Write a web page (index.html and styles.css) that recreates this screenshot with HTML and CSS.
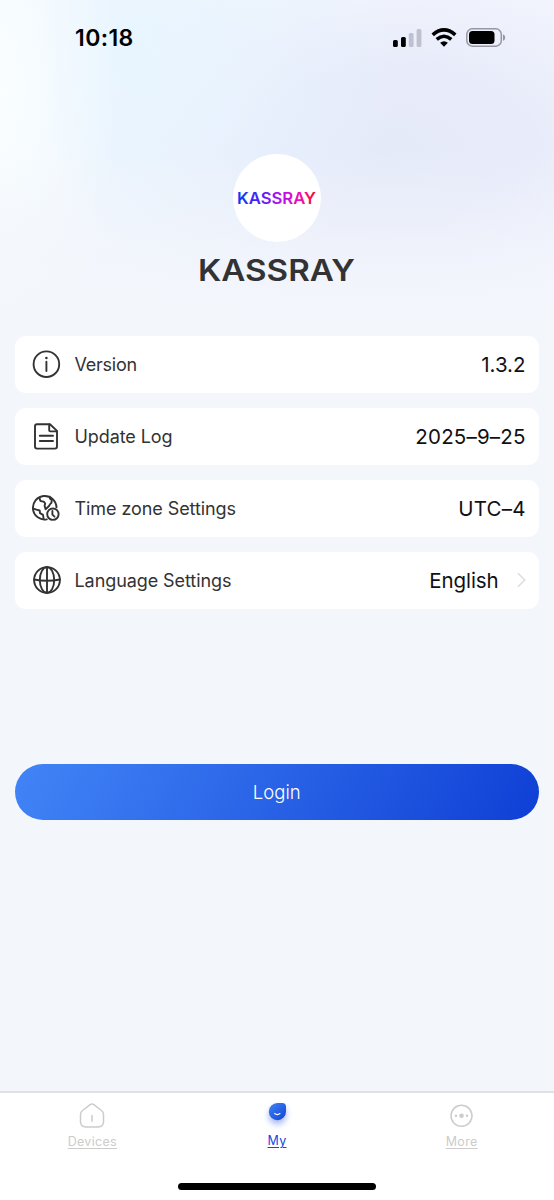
FILE: index.html
```html
<!DOCTYPE html>
<html lang="en">
<head>
<meta charset="utf-8">
<title>KASSRAY</title>
<link rel="stylesheet" href="styles.css">
</head>
<body>
<div class="app">
  <header class="status">
    <span class="time">10:18</span>
    <div class="status-icons">
      <svg width="29" height="18" viewBox="0 0 29 18"><rect x="0" y="11" width="4.8" height="7" rx="1.5"/><rect x="8" y="8" width="4.8" height="10" rx="1.5"/><g fill="#bfc1ce"><rect x="15.8" y="4" width="4.8" height="14" rx="1.5"/><rect x="23.6" y="0" width="4.8" height="18" rx="1.5"/></g></svg>
      <svg width="26" height="19" viewBox="0 0 26 19"><g fill="none" stroke="#000" stroke-width="3.6"><path d="M1.7 6.9Q13 -3 24.3 6.9"/><path d="M5.7 11.4Q13 5.1 20.3 11.4"/></g><path d="M9.1 14.8Q13 11.5 16.9 14.8L13 18.7Z"/></svg>
      <svg width="40" height="19" viewBox="0 0 40 19"><rect x=".8" y=".8" width="34.5" height="17.4" rx="5.5" fill="none" stroke="#96979f" stroke-width="1.5"/><rect x="3" y="3" width="25.5" height="13" rx="3.5"/><path d="M37 6.2Q39.2 7 39.2 9.5T37 12.8Z" fill="#96979f"/></svg>
    </div>
  </header>

  <section class="brand">
    <div class="avatar">
      <svg width="82" height="20" viewBox="0 0 82 20">
        <defs><linearGradient id="spectrum" gradientUnits="userSpaceOnUse" x1="0" y1="0" x2="80" y2="0"><stop offset="0" stop-color="#1238f5"/><stop offset=".3" stop-color="#4b20f5"/><stop offset=".55" stop-color="#b40df0"/><stop offset=".8" stop-color="#f00bb4"/><stop offset="1" stop-color="#f80d20"/></linearGradient></defs>
        <text class="logo-small" x="1" y="16" textLength="79" lengthAdjust="spacingAndGlyphs" fill="url(#spectrum)">KASSRAY</text>
      </svg>
    </div>
    <svg class="wordmark" width="166" height="40" viewBox="0 0 166 40"><text class="logo-large" x="4" y="31" textLength="157" lengthAdjust="spacingAndGlyphs">KASSRAY</text></svg>
  </section>

  <main class="list">
    <div class="row">
      <svg class="icon" viewBox="0 0 30 30"><circle cx="15.4" cy="15.2" r="12.8"/><path d="M15.4 12.7V22"/><circle cx="15.4" cy="9" r="1.3" fill="#333" stroke="none"/></svg>
      <span class="label version">Version</span><span class="value">1.3.2</span>
    </div>
    <div class="row">
      <svg class="icon" viewBox="0 0 30 30"><path d="M6 3.2H19L26 9.9V25.6Q26 27.6 24 27.6H6Q4 27.6 4 25.6V5.2Q4 3.2 6 3.2Z"/><path d="M18.2 3.4V9.2Q18.2 10.4 19.4 10.4H25.8M8.8 14.8H22M8.8 20H22"/></svg>
      <span class="label">Update Log</span><span class="value date">2025–9–25</span>
    </div>
    <div class="row">
      <svg class="icon" viewBox="0 0 30 30"><path d="M15.8 26.4A11.8 11.8 0 1 1 25.5 14.4"/><path d="M8.5 4.8L9.2 7.5Q9.6 8.4 11.2 8.4L12.9 8.7L14.2 10.5L13.6 12.7L14.6 16.2L18 13Q18.7 11.1 20.5 9.8L20.7 6.7L19 5.7L18.7 3.6M2.4 15.6L5.5 16.6L8.7 17.5L9 20.2L12 21.9L12.7 26.3"/><circle cx="21.9" cy="21.2" r="5.7"/><path d="M21.4 18V21.6L23.5 23.6"/></svg>
      <span class="label">Time zone Settings</span><span class="value utc">UTC–4</span>
    </div>
    <div class="row">
      <svg class="icon globe" viewBox="0 0 30 30"><circle cx="15" cy="15" r="12.9"/><ellipse cx="15" cy="15" rx="7.2" ry="12.9"/><path d="M15 2V28M2 14.5Q15 17 28 14.5"/></svg>
      <span class="label">Language Settings</span><span class="value english">English</span>
      <svg class="chevron" width="9" height="16" viewBox="0 0 9 16"><path d="M1 1.2L7.8 8L1 14.8"/></svg>
    </div>
  </main>

  <button class="login">Login</button>

  <nav class="tabs">
    <a class="tab"><svg width="28" height="28" viewBox="0 0 28 28"><path d="M11.8 2.9Q14 1.3 16.2 2.9L23.5 8.5Q25.5 10 25.5 12.4V19.5Q25.5 24.9 20 24.9H8Q2.5 24.9 2.5 19.5V12.4Q2.5 10 4.5 8.5ZM14 13.5V19.2"/></svg><span class="tab-label">Devices</span></a>
    <a class="tab active"><svg width="28" height="28" viewBox="0 0 28 28"><defs><linearGradient id="face" x1="0" y1="0" x2="1" y2="1"><stop stop-color="#4284f5"/><stop offset="1" stop-color="#1042d5"/></linearGradient></defs><path class="face" d="M14.4 1H19.2Q23 1 23 4.8V9.5A8.6 8.6 0 1 1 14.4 1Z"/><path class="smile" d="M11.7 11.6Q14.3 13.6 16.9 11.6"/></svg><span class="tab-label">My</span></a>
    <a class="tab"><svg width="28" height="28" viewBox="0 0 28 28"><circle cx="13.5" cy="13.8" r="10.5"/><g fill="#ccc" stroke="none"><circle cx="13.5" cy="13.8" r="2.3"/><circle cx="8" cy="13.8" r="1.2"/><circle cx="19" cy="13.8" r="1.2"/></g></svg><span class="tab-label">More</span></a>
    <div class="home-indicator"></div>
  </nav>
</div>
</body>
</html>
```
FILE: styles.css
```css
* { box-sizing: border-box; }
body { margin: 0; font-family: Inter, "Liberation Sans", sans-serif; }
.app {
  height: 1200px;
  display: flex;
  flex-direction: column;
  background:
    linear-gradient(to bottom, rgba(243,246,251,0) 0, rgba(243,246,251,0) 150px, #f3f6fb 330px),
    radial-gradient(ellipse 120px 330px at 0 90px, #fafeff 0, rgba(250,254,255,0) 100%),
    radial-gradient(ellipse 270px 260px at 130px 60px, #e8f5ff 0, rgba(232,245,255,0) 100%),
    radial-gradient(ellipse 330px 190px at 385px 150px, #e5eaf9 0, #e7ebfa 40%, rgba(242,245,253,0) 100%),
    #f3f6fd;
}
.status { height: 75px; padding: 0 48px 0 75px; display: flex; align-items: center; justify-content: space-between; }
.time { font-size: 23px; font-weight: 600; letter-spacing: .4px; }
.status-icons { display: flex; align-items: center; gap: 9px; }
.brand { height: 261px; padding-top: 79px; display: flex; flex-direction: column; align-items: center; }
.avatar { width: 88px; height: 88px; flex: none; border-radius: 50%; background: #fff; display: flex; align-items: center; justify-content: center; }
.wordmark { margin-top: 8px; }
.logo-small { font: 600 15.8px Inter, sans-serif; }
.logo-large { font: 600 29.5px Inter, sans-serif; fill: #333; }
.list { padding: 0 15.5px 0 15px; display: grid; gap: 15.5px; }
.row { height: 56.5px; padding: 0 13px 0 16px; display: flex; align-items: center; background: #fff; border-radius: 11px; }
.icon { width: 30px; height: 30px; margin-right: 13.5px; fill: none; stroke: #333; stroke-width: 1.9; stroke-linecap: round; stroke-linejoin: round; }
.globe { width: 32px; margin-right: 11.5px; }
.label { font-size: 18px; color: #333; letter-spacing: -.08px; padding-top: 1px; }
.version { letter-spacing: -.25px; }
.value { margin-left: auto; font-size: 20.5px; color: #111; }
.date, .utc { letter-spacing: .2px; margin-right: -.2px; }
.english { letter-spacing: -.1px; }
.chevron { margin-left: 18px; fill: none; stroke: #ddd; stroke-width: 1.5; }
.login { height: 56.5px; margin: 155px 15.5px 0 15px; border: 0; border-radius: 29px; background: linear-gradient(120deg, #4285f7, #0f3fd5); color: #fff; font: 300 18.5px Inter, sans-serif; }
.tabs { height: 109px; margin-top: auto; padding-top: 9px; border-top: 2px solid #dfe1e5; background: #fff; display: grid; grid-template-columns: repeat(3, 1fr); grid-template-rows: 1fr 17px; }
.tab { display: flex; flex-direction: column; align-items: center; color: #ccc; }
.tab svg { fill: none; stroke: #ccc; stroke-width: 1.5; stroke-linecap: round; overflow: visible; }
.tab-label { margin-top: 4px; font-size: 12.5px; line-height: 16px; letter-spacing: .3px; text-decoration: underline; text-underline-offset: 2px; }
.active { color: #1747d8; }
.active .tab-label { margin-top: 3px; }
.tab .face { fill: url(#face); stroke: none; filter: drop-shadow(0 4px 3px #1747d866); }
.tab .smile { stroke: #fff; stroke-width: 1.3; }
.home-indicator { grid-column: 1 / -1; justify-self: center; width: 198px; height: 7px; border-radius: 4px; background: #000; }
```
